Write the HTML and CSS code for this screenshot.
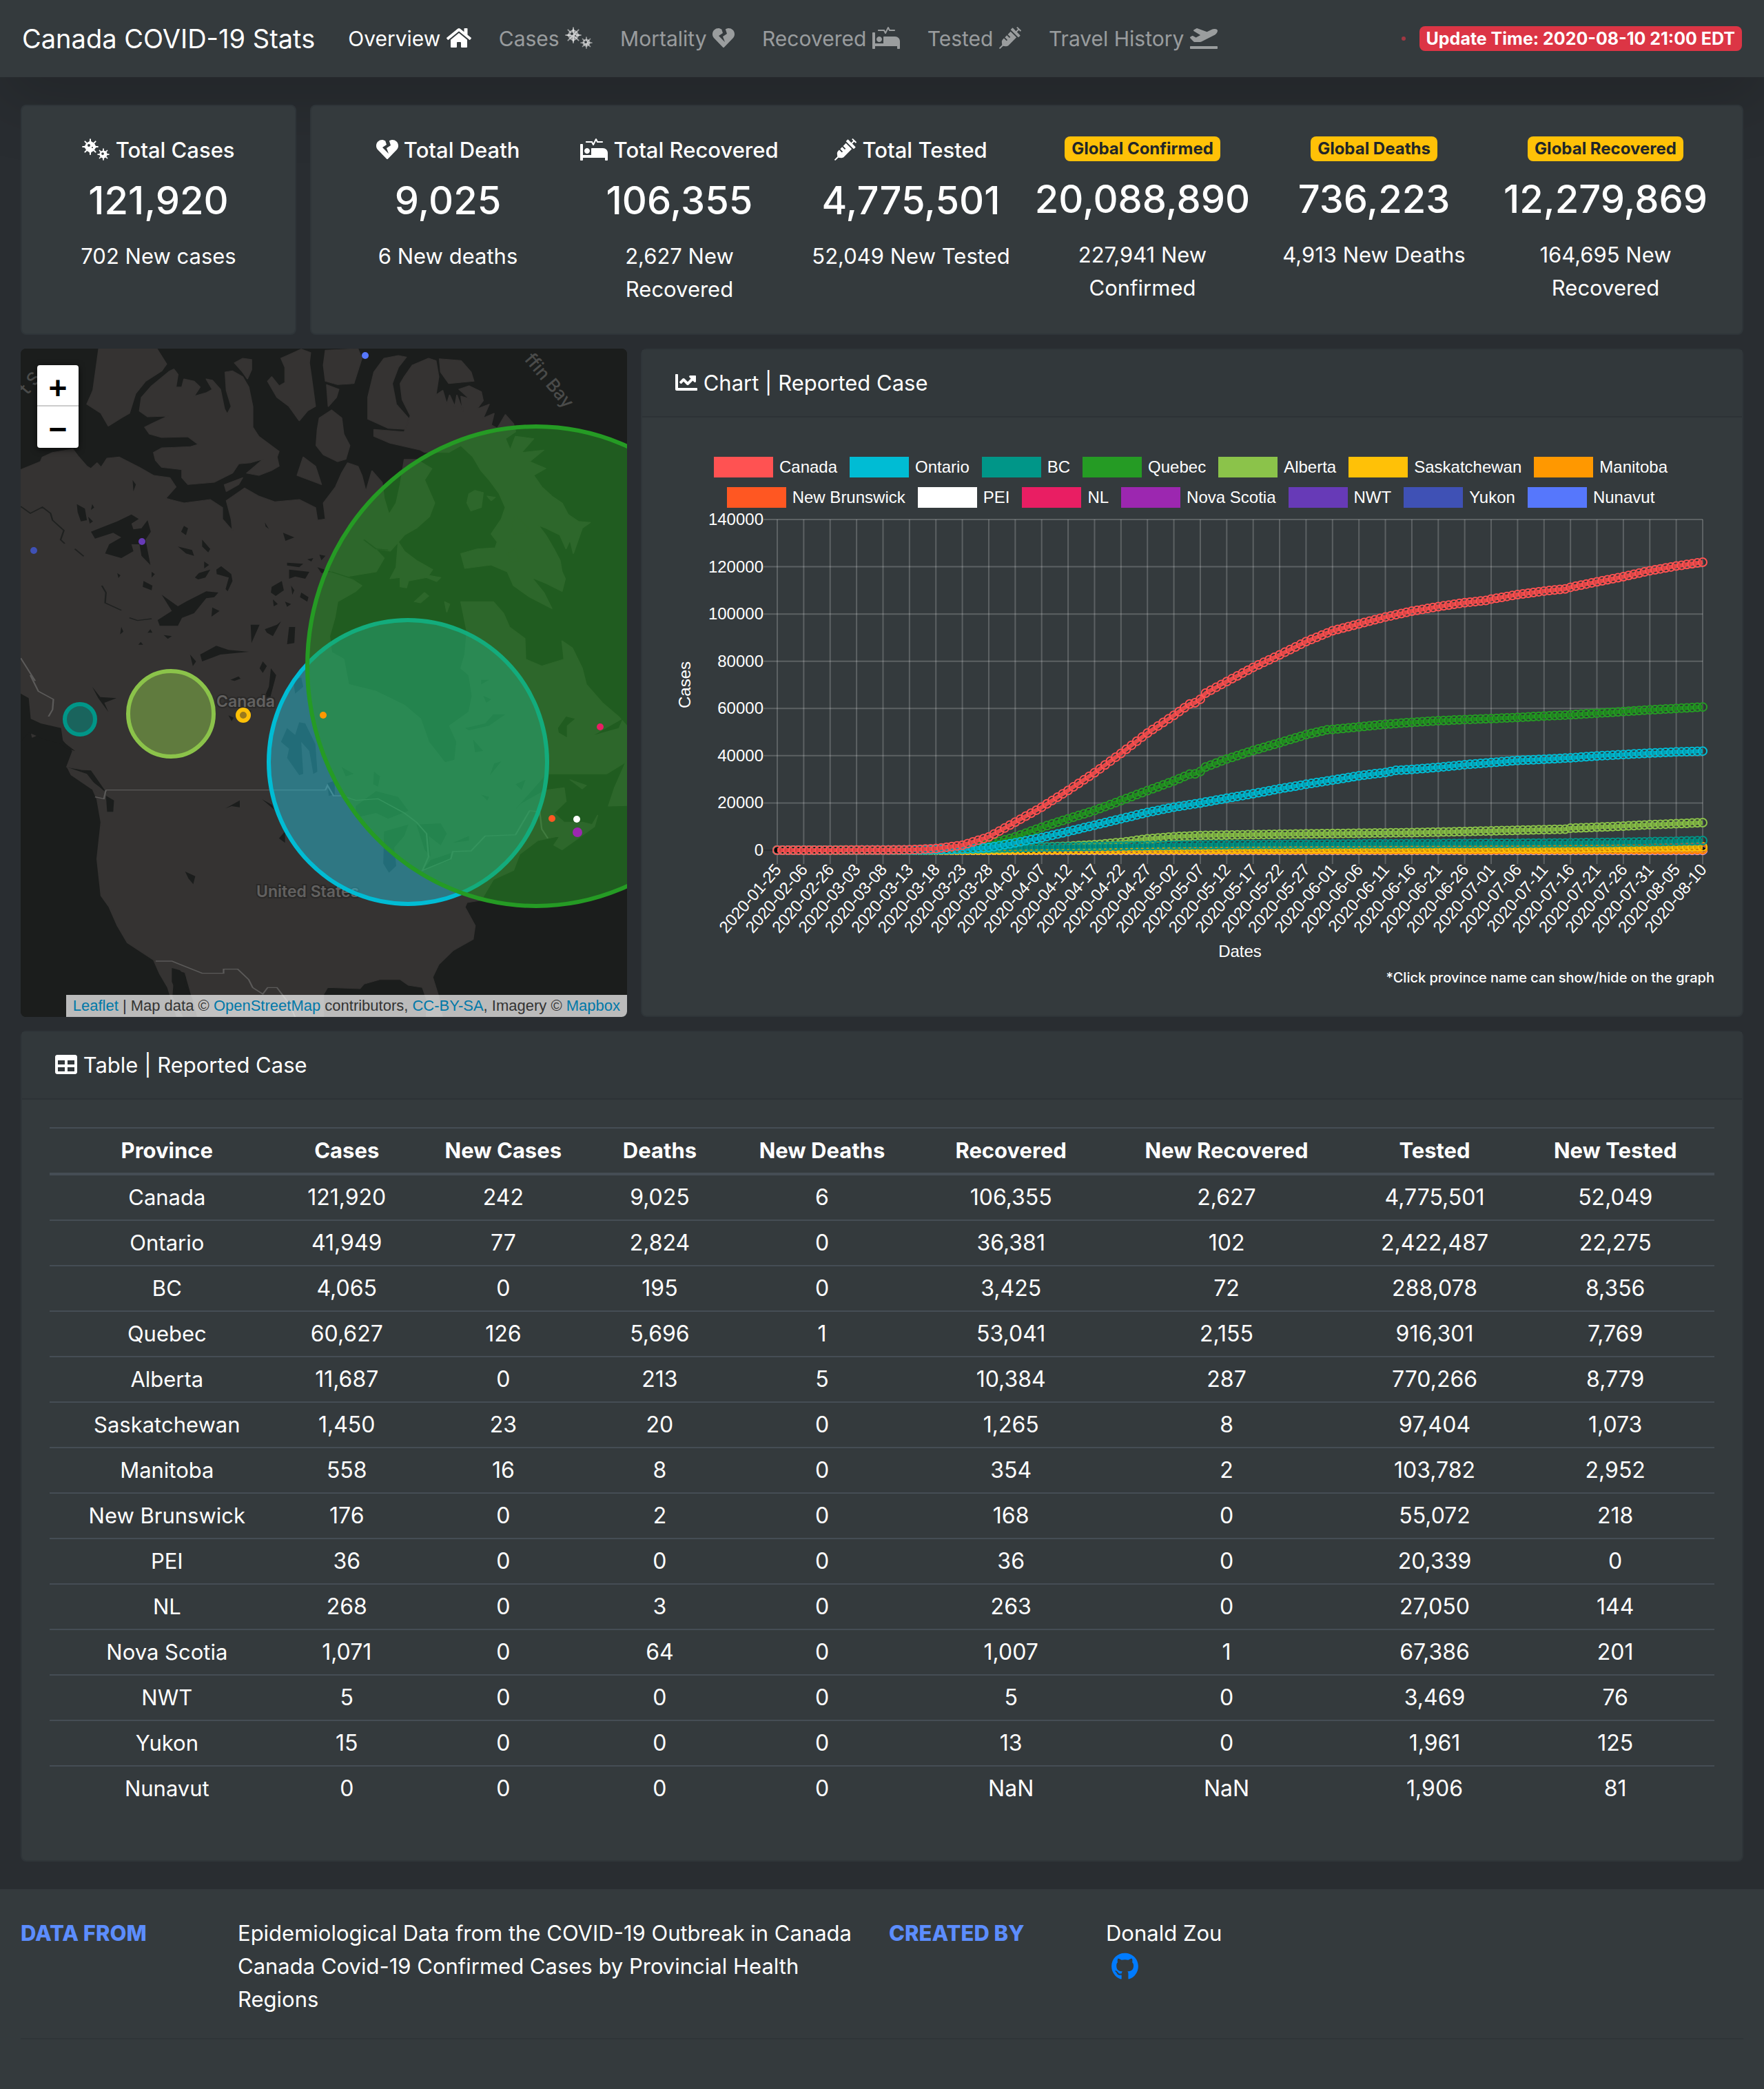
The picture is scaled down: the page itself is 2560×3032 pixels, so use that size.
FILE: index.html
```html
<!DOCTYPE html>
<html lang="en">
<head>
<meta charset="utf-8">
<meta name="viewport" content="width=device-width, initial-scale=1">
<title>Canada COVID-19 Stats</title>
<link rel="stylesheet" href="styles.css">
</head>
<body>
<svg class="sprite" aria-hidden="true">
  <symbol id="i-home" viewBox="0 0 576 512"><path d="M280.37 148.26L96 300.11V464a16 16 0 0 0 16 16l112.06-.29a16 16 0 0 0 15.92-16V368a16 16 0 0 1 16-16h64a16 16 0 0 1 16 16v95.64a16 16 0 0 0 16 16.05L464 480a16 16 0 0 0 16-16V300L295.67 148.26a12.19 12.19 0 0 0-15.3 0zM571.6 251.47L488 182.56V44.05a12 12 0 0 0-12-12h-56a12 12 0 0 0-12 12v72.61L318.47 43a48 48 0 0 0-61 0L4.34 251.47a12 12 0 0 0-1.6 16.9l25.5 31A12 12 0 0 0 45.15 301l235.22-193.74a12.19 12.19 0 0 1 15.3 0L530.9 301a12 12 0 0 0 16.9-1.6l25.5-31a12 12 0 0 0-1.7-16.93z"/></symbol>
  <symbol id="i-viruses" viewBox="0 0 640 512">
    <mask id="virus-holes"><rect width="640" height="512" fill="#fff"/><circle cx="160" cy="160" r="32"/><circle cx="240" cy="208" r="16"/><circle cx="480" cy="352" r="30"/></mask>
    <g mask="url(#virus-holes)">
      <circle cx="192" cy="192" r="122"/><circle cx="496" cy="368" r="90"/>
      <path fill="none" stroke="currentColor" stroke-width="32" stroke-linecap="round" d="M192 18v348M18 192h348M70 70l244 244M314 70L70 314"/>
      <path fill="none" stroke="currentColor" stroke-width="28" stroke-linecap="round" d="M496 242v252M370 368h252M408 280l176 176M584 280L408 456"/>
      <path d="M150 90l42-60 42 60zM150 294l42 60 42-60zM90 150l-60 42 60 42zM294 150l60 42-60 42z"/>
    </g>
  </symbol>
  <symbol id="i-heart" viewBox="0 0 512 512"><path d="M473.7 73.8l-2.4-2.5c-46-47-118-51.7-169.6-14.8L336 159.9l-96 64 48 128-144-144 96-64-28.6-86.5C159.7 19.6 87 24 40.7 71.4l-2.4 2.4C-10.4 123.6-12.5 202.9 31 256l212.1 218.6c7.1 7.3 18.6 7.3 25.7 0L481 255.9c43.5-53 41.4-132.3-7.3-182.1z"/></symbol>
  <symbol id="i-bed" viewBox="0 0 640 512"><path d="M528 224H272c-8.8 0-16 7.2-16 16v144H64V144c0-8.8-7.2-16-16-16H16c-8.8 0-16 7.2-16 16v352c0 8.8 7.2 16 16 16h32c8.8 0 16-7.2 16-16v-48h512v48c0 8.8 7.2 16 16 16h32c8.8 0 16-7.2 16-16V336c0-61.9-50.1-112-112-112zM136 96h126.1l27.6 55.2c5.9 11.8 22.7 11.8 28.6 0L368 51.8 390.1 96H512c8.8 0 16-7.2 16-16s-7.2-16-16-16H409.9L382.3 8.8C376.4-3 359.6-3 353.7 8.8L304 108.2l-19.9-39.8c-1.4-2.7-4.1-4.4-7.2-4.4H136c-4.4 0-8 3.6-8 8v16c0 4.4 3.6 8 8 8zm24 256c35.3 0 64-28.7 64-64s-28.7-64-64-64-64 28.7-64 64 28.7 64 64 64z"/></symbol>
  <symbol id="i-syringe" viewBox="0 0 512 512"><path d="M201.5 174.8l55.7 55.8c3.1 3.1 3.1 8.2 0 11.3l-11.3 11.3c-3.1 3.1-8.2 3.1-11.3 0l-55.7-55.8-45.3 45.3 55.8 55.8c3.1 3.1 3.1 8.2 0 11.3l-11.3 11.3c-3.1 3.1-8.2 3.1-11.3 0L111 265.2l-26.4 26.4c-17.3 17.3-25.6 41.1-23 65.4l7.1 63.6L2.3 487c-3.1 3.1-3.1 8.2 0 11.3l11.3 11.3c3.1 3.1 8.2 3.1 11.3 0l66.3-66.3 63.6 7.1c23.9 2.6 47.9-5.4 65.4-23l181.9-181.9-135.7-135.7-64.9 65zm308.2-93.3L430.5 2.3c-3.1-3.1-8.2-3.1-11.3 0l-11.3 11.3c-3.1 3.1-3.1 8.2 0 11.3l28.3 28.3-45.3 45.3-56.6-56.6-17-17c-3.1-3.1-8.2-3.1-11.3 0l-33.9 33.9c-3.1 3.1-3.1 8.2 0 11.3l17 17L424.8 223l17 17c3.1 3.1 8.2 3.1 11.3 0l33.9-34c3.1-3.1 3.1-8.2 0-11.3l-73.5-73.5 45.3-45.3 28.3 28.3c3.1 3.1 8.2 3.1 11.3 0l11.3-11.3c3.1-3.2 3.1-8.2 0-11.4z"/></symbol>
  <symbol id="i-plane" viewBox="0 0 640 512"><path d="M624 448H16c-8.84 0-16 7.16-16 16v32c0 8.84 7.16 16 16 16h608c8.84 0 16-7.16 16-16v-32c0-8.84-7.16-16-16-16zM80.55 341.27c6.28 6.84 15.1 10.72 24.33 10.71l130.54-.18a65.62 65.62 0 0 0 29.64-7.12l290.96-147.65c26.74-13.57 50.71-32.94 67.02-58.31 18.31-28.48 20.3-49.09 13.07-63.65-7.21-14.57-24.74-25.27-58.25-27.45-29.85-1.94-59.54 5.92-86.28 19.48l-98.51 49.99-218.7-82.06a17.799 17.799 0 0 0-18-1.11L90.62 67.29c-10.67 5.41-13.25 19.65-5.17 28.53l156.22 98.1-103.21 52.38-72.35-36.47a17.804 17.804 0 0 0-16.07.02L9.91 230.22c-10.44 5.3-13.19 19.12-5.57 28.08l76.21 82.97z"/></symbol>
  <symbol id="i-chart" viewBox="0 0 512 512"><path d="M496 384H64V80c0-8.84-7.16-16-16-16H16C7.16 64 0 71.16 0 80v336c0 17.67 14.33 32 32 32h464c8.84 0 16-7.16 16-16v-32c0-8.84-7.16-16-16-16zM464 96H345.94c-21.38 0-32.09 25.85-16.97 40.97l32.4 32.4L288 242.75l-73.37-73.37c-12.5-12.5-32.76-12.5-45.25 0l-68.69 68.69c-6.25 6.25-6.25 16.38 0 22.63l22.62 22.62c6.25 6.25 16.38 6.25 22.63 0L192 237.25l73.37 73.37c12.5 12.5 32.76 12.5 45.25 0l96-96 32.4 32.4c15.12 15.12 40.97 4.41 40.97-16.97V112c.01-8.84-7.15-16-15.99-16z"/></symbol>
  <symbol id="i-table" viewBox="0 0 512 512"><path d="M464 32H48C21.49 32 0 53.49 0 80v352c0 26.51 21.49 48 48 48h416c26.51 0 48-21.49 48-48V80c0-26.51-21.49-48-48-48zM224 416H64v-96h160v96zm0-160H64v-96h160v96zm224 160H288v-96h160v96zm0-160H288v-96h160v96z"/></symbol>
  <symbol id="i-github" viewBox="0 0 496 512"><path d="M165.9 397.4c0 2-2.3 3.6-5.2 3.6-3.3.3-5.6-1.3-5.6-3.6 0-2 2.3-3.6 5.2-3.6 3-.3 5.6 1.3 5.6 3.6zm-31.1-4.5c-.7 2 1.3 4.3 4.3 4.9 2.6 1 5.6 0 6.2-2s-1.3-4.3-4.3-5.2c-2.6-.7-5.5.3-6.2 2.3zm44.2-1.7c-2.9.7-4.9 2.6-4.6 4.9.3 2 2.9 3.3 5.9 2.6 2.9-.7 4.9-2.6 4.6-4.6-.3-1.9-3-3.2-5.9-2.9zM244.8 8C106.1 8 0 113.3 0 252c0 110.9 69.8 205.8 169.5 239.2 12.8 2.3 17.3-5.6 17.3-12.1 0-6.2-.3-40.4-.3-61.4 0 0-70 15-84.7-29.8 0 0-11.4-29.1-27.8-36.6 0 0-22.9-15.7 1.6-15.4 0 0 24.9 2 38.6 25.8 21.9 38.6 58.6 27.5 72.9 20.9 2.3-16 8.8-27.1 16-33.7-55.9-6.2-112.3-14.3-112.3-110.5 0-27.5 7.6-41.3 23.6-58.9-2.6-6.5-11.1-33.3 2.6-67.9 20.9-6.5 69 27 69 27 20-5.6 41.5-8.5 62.8-8.5s42.8 2.9 62.8 8.5c0 0 48.1-33.6 69-27 13.7 34.7 5.2 61.4 2.6 67.9 16 17.7 25.8 31.5 25.8 58.9 0 96.5-58.9 104.2-114.8 110.5 9.2 7.9 17 22.9 17 46.4 0 33.7-.3 75.4-.3 83.6 0 6.5 4.6 14.4 17.3 12.1C428.2 457.8 496 362.9 496 252 496 113.3 383.5 8 244.8 8z"/></symbol>
</svg>

<header class="navbar">
  <a class="brand" href="#">Canada COVID-19 Stats</a>
  <nav class="nav" aria-label="Main">
    <a class="nav-link active" href="#">Overview <svg class="icon icon-home"><use href="#i-home"/></svg></a>
    <a class="nav-link" href="#cases">Cases <svg class="icon icon-wide"><use href="#i-viruses"/></svg></a>
    <a class="nav-link" href="#mortality">Mortality <svg class="icon"><use href="#i-heart"/></svg></a>
    <a class="nav-link" href="#recovered">Recovered <svg class="icon icon-wide"><use href="#i-bed"/></svg></a>
    <a class="nav-link" href="#tested">Tested <svg class="icon"><use href="#i-syringe"/></svg></a>
    <a class="nav-link" href="#travel">Travel History <svg class="icon icon-wide"><use href="#i-plane"/></svg></a>
  </nav>
  <div class="updated">
    <span class="pulse"></span>
    <span class="badge badge-danger">Update Time: 2020-08-10 21:00 EDT</span>
  </div>
</header>

<main class="page">
  <section class="row row-stats">
    <div class="card stats">
      <div class="stat">
        <h2 class="stat-title"><svg class="icon icon-wide"><use href="#i-viruses"/></svg> Total Cases</h2>
        <p class="stat-number">121,920</p>
        <p class="stat-new">702 New cases</p>
      </div>
    </div>
    <div class="card stats">
      <div class="stat">
        <h2 class="stat-title"><svg class="icon"><use href="#i-heart"/></svg> Total Death</h2>
        <p class="stat-number">9,025</p>
        <p class="stat-new">6 New deaths</p>
      </div>
      <div class="stat">
        <h2 class="stat-title"><svg class="icon icon-wide"><use href="#i-bed"/></svg> Total Recovered</h2>
        <p class="stat-number">106,355</p>
        <p class="stat-new">2,627 New Recovered</p>
      </div>
      <div class="stat">
        <h2 class="stat-title"><svg class="icon"><use href="#i-syringe"/></svg> Total Tested</h2>
        <p class="stat-number">4,775,501</p>
        <p class="stat-new">52,049 New Tested</p>
      </div>
      <div class="stat">
        <h2 class="stat-title stat-title-badge"><span class="badge badge-warning">Global Confirmed</span></h2>
        <p class="stat-number">20,088,890</p>
        <p class="stat-new">227,941 New Confirmed</p>
      </div>
      <div class="stat">
        <h2 class="stat-title stat-title-badge"><span class="badge badge-warning">Global Deaths</span></h2>
        <p class="stat-number">736,223</p>
        <p class="stat-new">4,913 New Deaths</p>
      </div>
      <div class="stat">
        <h2 class="stat-title stat-title-badge"><span class="badge badge-warning">Global Recovered</span></h2>
        <p class="stat-number">12,279,869</p>
        <p class="stat-new">164,695 New Recovered</p>
      </div>
    </div>
  </section>

  <section class="row row-main">
    <div class="map">
      <svg class="map-canvas" viewBox="0 0 880 970" preserveAspectRatio="xMidYMid slice" role="img" aria-label="Map of reported cases by province">
        <rect width="880" height="970" fill="#1b1d1c"/>
        <g transform="translate(-30 -16) scale(.58676 .33333)">
          <g fill="#353332" stroke="#353332" stroke-width="3" stroke-linejoin="round">
            <path d="M245 40H385L412 115 400 145 360 190 335 245 320 330 300 350 268 385 250 330 215 290 230 230 238 130z"/>
            <path d="M430 137L440 160 435 215 450 215 455 180 480 190 495 215 480 255 510 240 525 225 510 180 525 185 545 225 555 310 562 333 572 300 560 230 557 150 575 145 600 170 615 215 625 300 625 390 640 430 690 495 685 520 690 560 670 580 640 600 610 590 650 530 620 545 590 550 575 590 530 630 465 640 450 610 450 575 400 565 385 535 380 500 400 480 470 475 490 465 465 432 400 435 370 420 358 390 375 375 415 342 365 345 345 320 350 260 375 210 420 145z"/>
            <path d="M580 110L600 90 622 95 622 140 612 180 600 150z"/>
            <path d="M695 90L720 70 745 50 768 65 765 110 770 170 780 300 760 320 740 362 715 300 685 260 662 190 672 170 690 210 705 195 705 130z"/>
            <path d="M805 55L885 48 895 90 875 200 835 205 805 190 800 120zM808 205L838 225 832 260 812 300z"/>
            <path d="M790 350L820 315 845 350 850 420 865 470 855 530 835 540 800 510 782 470 785 400z"/>
            <path d="M950 90L985 78 1005 85 985 130 970 200 980 290 1010 350 1005 400 960 395 910 355 910 260 925 150z"/>
            <path d="M1087 92L1140 100 1165 150 1172 190 1110 200 1090 150z"/>
            <path d="M735 600L750 520 780 560 795 640zM555 640L600 610 590 640 560 670z"/>
            <path d="M1000 170L1020 120 1060 90 1078 100 1085 170 1078 250 1095 230 1105 290 1112 250 1125 300 1130 250 1145 320 1140 255 1160 265 1135 225 1160 210 1190 235 1195 275 1180 310 1210 290 1195 350 1222 330 1215 380 1230 395 1250 335 1270 375 1275 410 1250 440 1262 490 1275 430 1320 440 1290 500 1345 490 1310 540 1350 570 1320 600 1340 650 1365 690 1390 720 1405 770 1430 800 1460 805 1440 830 1430 880 1418 940 1410 880 1400 920 1385 860 1350 830 1332 818 1350 860 1370 920 1385 970 1390 1020 1398 1050 1390 1105 1350 1070 1315 1045 1345 1110 1365 1180 1310 1130 1270 1080 1255 1020 1215 990 1150 1005 1140 940 1180 920 1225 915 1230 890 1215 855 1240 790 1250 740 1235 680 1210 620 1190 580 1170 520 1140 470 1110 500 1050 500 1040 490 965 460 925 430 925 400 1000 410 1015 340 995 270 990 200z"/>
            <path d="M1275 775L1308 830 1300 850 1270 855 1265 820zM1160 680L1175 665 1195 675 1190 740 1165 755 1155 720zM1025 1150L1050 1110 1060 1125 1040 1155zM1205 690L1225 695 1215 710zM1100 1150L1112 1160 1105 1195zM1255 940L1275 920 1285 970 1265 980z"/>
            <path d="M985 890L1000 930 1030 970 1070 1010 1060 1035 1090 1045 1080 1062 1055 1045 1010 1060 1005 1090 990 1085 990 1045 965 1050 980 1000z"/>
            <path d="M51 575L100 540 105 520 130 500 180 485 195 520 215 560 225 570 240 545 250 565 265 525 295 520 345 565 380 600 420 610 435 650 410 700 455 720 520 705 550 740 550 790 575 840 572 790 560 710 605 655 640 690 680 715 740 705 780 740 785 795 805 790 800 720 830 650 845 590 860 545 885 560 895 600 905 670 920 580 945 630 950 700 962 770 980 720 990 640 1000 530 1030 530 1068 570 1050 620 1075 720 1062 780 1030 830 1000 860 985 890 965 930 930 920 905 875 950 960 930 1020 860 1040 895 1080 880 1105 835 1150 828 1220 815 1300 820 1370 850 1400 862 1510 930 1540 1000 1600 1040 1660 1060 1760 1100 1850 1125 1840 1130 1760 1112 1690 1160 1630 1168 1560 1160 1470 1140 1440 1150 1380 1155 1280 1140 1150 1220 1150 1245 1200 1260 1260 1298 1310 1300 1400 1340 1430 1395 1400 1390 1320 1415 1350 1440 1440 1450 1510 1490 1590 1530 1650 1560 1710 1560 1835 1500 1900 1350 1900 1330 1940 1245 2110 1290 2030 1350 1970 1395 1960 1400 2020 1370 2070 1395 2110 1440 2110 1465 2120 1478 2080 1470 2130 1390 2230 1370 2210 1385 2170 1330 2190 1285 2250 1270 2320 1220 2360 1190 2450 1155 2460 1150 2480 1175 2560 1170 2620 1120 2670 1085 2730 1070 2785 1085 2870 1095 2970 1055 2970 1055 2880 1045 2830 1010 2820 990 2795 940 2795 900 2815 890 2835 810 2830 800 2860 800 2970 490 2970 475 2870 458 2765 430 2750 425 2870 455 2970 440 2970 415 2830 395 2770 380 2710 315 2635 290 2560 270 2480 250 2430 245 2350 240 2270 250 2110 240 2010 225 1950 200 1880 165 1870 180 1800 150 1740 130 1700 80 1740 70 1650 51 1540z"/>
            <path d="M1550 1840L1520 1960 1505 2040 1550 2038zM1410 1925L1450 1950 1440 1965z"/>
          </g>
          <g fill="#1b1d1c">
            <path d="M225 845l65-45 35-30 18 20-18 20 5 25 20-5 15-35 8 50-13 35 12 110-22-40-5-50-20 0 5 30-30 30-40-20 10-40 30-30-20-20-45 25z"/>
            <path d="M400 1120l40 50 20-20 50-45 30 5-10 20-20 5-30 65-30 20-10 35h-45l-5-25 35-40z"/>
            <path d="M535 1010l12-15 25 35 3 30-12 45-5-10 8-50-30-15zM500 1410l-5-30 40-38 30 18 50 8-70 12zM650 1410l10 20-10 30-8-20zM670 1440l13 30-15 100-18 10 15-60zM470 1380l15 30-8 20zM482 1045l10-20 28-15-12 35-18 8z"/>
            <path d="M190 725l20 20 5 50-15 5-8-40zM228 725l5 15-8 10zM218 780l12 20-8 10zM328 620l8 20-6 30zM455 820l10 10-5 30-12-15zM440 910l35 15 5 25-20-10zM500 880l20 40-5 15-15-25zM505 975l12 15-12 15zM655 805l10 28-8-10zM700 850l28 20-22 15zM710 980l40 5-10 15-30-8zM355 1060l22 20-2 20-22-15zM300 1260l5 20-8 12zM405 1295l20 5-10 12zM372 1270l5 15-12 0zM348 1325l6 12-12 0zM525 1175l18 15-20 25zM620 1250l22 0-20 80zM655 1270l30-20 10-15-20 65-15-15zM715 1260l15 0-2 70-18 5zM672 1085l25-25 5 40-20 25-12-15zM715 1010l50 10-10 30-25-10-15 10zM745 1110l18 20-3 20-18-20zM720 1080l8 20-5 20zM675 1140l12 20-10 10zM705 1150l15 10-10 12zM760 965l15-5-5 15zM790 945l15 5-10 20zM785 1000l35 20-25 5zM290 1025l8 10-5 12zM375 1020l8 10-8 15z"/>
            <path d="M570 1490l20-15 5 10-15 10zM228 1520l20 45 40 5-30 20 10 40-25-60zM565 1645l13 10-5 15zM610 1620l12 5-8 15zM558 2050l35-35 0 30-20-5zM648 2010l25 25 5 20zM690 2180l15-30 0 50zM458 2325l25 20-5 35-12-25z"/>
            <path d="M740 1675l15 5 25 90 5 120-10 10-10-100-20-40 5 140-10 5-30-75 5-40-20-30 15-60 20 30zM725 1490l20-10 5 40-20 30z"/>
            <path d="M880 2040l50-65 55 25 25 60-50 35-30-25-50 20zM950 2150l60-30-10 50-25 50 5 80-18 30-14-40zM1030 2120l60-5 15 45-15 50-30-40 5 90-15-30zM1045 2320l70-45 0-30-50 30zM1120 2200l40-30 0 20zM810 1940l18-10 0 60-15 5z"/>
            <path d="M1380 1700l20-50 22 10-20 30 0 50-20-20zM1470 1730l20-20 50-50-10 40-40 20zM1240 1845l-18 10-10 50zM925 1890l15 20-5 45-12-10zM1190 1990l20 10-5 15zM1275 1945l25-20-10 45zM1170 1750l25 50-20 5zM1150 1700l50-20 20-40 30 0-40 50-50 20zM1190 1490l20 0-20 20zM1195 1560l20 15-12 15zM845 1870l30 30-20 10z"/>
            <path d="M51 1550l20 20 5 90 25 20 50 20 5 60 30 40-20-10-15-20-40-20-40-30-20 40zM262 1995l20 20-2 50-15 0zM165 1880l60 5 40 100-20-30-30-40z"/>
            <path d="M425 2745l20 10 15 30-5 30 20 60 15 100-30-40-20-70-15-60z"/>
          </g>
          <g fill="#353332"><path d="M165 1870L215 1900 255 1990 225 1965 175 1905z"/></g>
          <g fill="none" stroke="#1f2120" stroke-width="4">
            <path d="M51 735l24 30 30-27 20 27 5 30 28 45-8 40 10 17M185 920l22 32M252 1080l10 30-2 45 40 32M320 1220l20 12 35-8M900 880l30 40 30 5M820 1020l70 40"/>
          </g>
          <g fill="none" stroke="#5b5a59" stroke-width="4">
            <path d="M262 1970H805l5-20 15 45 20 0 35 20 55-7 65 62 30 40 25 50 5 100-15 60 70-50 5-32 45-3 35-65 75-5 35-105 25 5 5 75 15 40"/>
            <path d="M385 2715h40l75 53h53v-18h35l27 45 10 35 25 28 12-28h23l30 70 15 58M75 1470l20 70 37 35-2 45-10 30M51 1395l36 100M235 2000l22 8 5-38"/>
          </g>
        </g>
        <g class="map-label">
          <text x="284" y="520">Canada</text>
          <text x="342" y="796">United States</text>
          <text class="sea" transform="translate(730 16) rotate(50)">ffin Bay</text>
          <text class="sea" transform="translate(10 68) rotate(-50)">t S</text>
        </g>
        <g stroke-width="6">
          <circle cx="86" cy="538" r="22" fill="#009688" fill-opacity=".5" stroke="#009688"/>
          <ellipse cx="562" cy="600" rx="202" ry="206" fill="#2abbd4" fill-opacity=".5" stroke="#00bcd4"/>
          <ellipse cx="748" cy="461" rx="332" ry="348" fill="#259b24" fill-opacity=".5" stroke="#259b24"/>
          <circle cx="218" cy="530" r="62" fill="#8bc34a" fill-opacity=".5" stroke="#8bc34a"/>
          <circle cx="323" cy="532" r="8" fill="#ffc107" fill-opacity=".5" stroke="#ffc107"/>
        </g>
        <circle cx="439" cy="532" r="5" fill="#ff9800"/>
        <circle cx="841" cy="549" r="5" fill="#e91e63"/>
        <circle cx="771" cy="682" r="5" fill="#ff5722"/>
        <circle cx="807" cy="683" r="5" fill="#fff"/>
        <circle cx="808" cy="702" r="7" fill="#9c27b0"/>
        <circle cx="500" cy="10" r="5" fill="#5677fc"/>
        <circle cx="176" cy="280" r="5" fill="#673ab7"/>
        <circle cx="19" cy="293" r="5" fill="#3f51b5"/>
      </svg>
      <div class="zoom">
        <button type="button" aria-label="Zoom in">+</button>
        <button type="button" aria-label="Zoom out">−</button>
      </div>
      <p class="attribution"><a href="#leaflet">Leaflet</a> | Map data © <a href="#osm">OpenStreetMap</a> contributors, <a href="#cc">CC-BY-SA</a>, Imagery © <a href="#mapbox">Mapbox</a></p>
    </div>

    <div class="card">
      <h2 class="card-header"><svg class="icon"><use href="#i-chart"/></svg> Chart | Reported Case</h2>
      <div class="card-body chart-body">
        <div class="legend" id="legend"></div>
        <svg class="chart" id="chart" viewBox="972 744 1516 660" role="img" aria-label="Reported cases over time"></svg>
        <p class="footnote">*Click province name can show/hide on the graph</p>
      </div>
    </div>
  </section>

  <section class="card">
    <h2 class="card-header"><svg class="icon"><use href="#i-table"/></svg> Table | Reported Case</h2>
    <div class="card-body">
      <table class="table">
        <colgroup><col class="c-province"><col class="c-cases"><col class="c-new-cases"><col class="c-deaths"><col class="c-new-deaths"><col class="c-recovered"><col class="c-new-recovered"><col class="c-tested"><col></colgroup>
        <thead><tr><th>Province</th><th>Cases</th><th>New Cases</th><th>Deaths</th><th>New Deaths</th><th>Recovered</th><th>New Recovered</th><th>Tested</th><th>New Tested</th></tr></thead>
        <tbody>
          <tr><td>Canada</td><td>121,920</td><td>242</td><td>9,025</td><td>6</td><td>106,355</td><td>2,627</td><td>4,775,501</td><td>52,049</td></tr>
          <tr><td>Ontario</td><td>41,949</td><td>77</td><td>2,824</td><td>0</td><td>36,381</td><td>102</td><td>2,422,487</td><td>22,275</td></tr>
          <tr><td>BC</td><td>4,065</td><td>0</td><td>195</td><td>0</td><td>3,425</td><td>72</td><td>288,078</td><td>8,356</td></tr>
          <tr><td>Quebec</td><td>60,627</td><td>126</td><td>5,696</td><td>1</td><td>53,041</td><td>2,155</td><td>916,301</td><td>7,769</td></tr>
          <tr><td>Alberta</td><td>11,687</td><td>0</td><td>213</td><td>5</td><td>10,384</td><td>287</td><td>770,266</td><td>8,779</td></tr>
          <tr><td>Saskatchewan</td><td>1,450</td><td>23</td><td>20</td><td>0</td><td>1,265</td><td>8</td><td>97,404</td><td>1,073</td></tr>
          <tr><td>Manitoba</td><td>558</td><td>16</td><td>8</td><td>0</td><td>354</td><td>2</td><td>103,782</td><td>2,952</td></tr>
          <tr><td>New Brunswick</td><td>176</td><td>0</td><td>2</td><td>0</td><td>168</td><td>0</td><td>55,072</td><td>218</td></tr>
          <tr><td>PEI</td><td>36</td><td>0</td><td>0</td><td>0</td><td>36</td><td>0</td><td>20,339</td><td>0</td></tr>
          <tr><td>NL</td><td>268</td><td>0</td><td>3</td><td>0</td><td>263</td><td>0</td><td>27,050</td><td>144</td></tr>
          <tr><td>Nova Scotia</td><td>1,071</td><td>0</td><td>64</td><td>0</td><td>1,007</td><td>1</td><td>67,386</td><td>201</td></tr>
          <tr><td>NWT</td><td>5</td><td>0</td><td>0</td><td>0</td><td>5</td><td>0</td><td>3,469</td><td>76</td></tr>
          <tr><td>Yukon</td><td>15</td><td>0</td><td>0</td><td>0</td><td>13</td><td>0</td><td>1,961</td><td>125</td></tr>
          <tr><td>Nunavut</td><td>0</td><td>0</td><td>0</td><td>0</td><td>NaN</td><td>NaN</td><td>1,906</td><td>81</td></tr>
        </tbody>
      </table>
    </div>
  </section>
</main>

<footer class="footer">
  <div class="footer-grid">
    <h2 class="footer-title">DATA FROM</h2>
    <div>
      <p>Epidemiological Data from the COVID-19 Outbreak in Canada</p>
      <p class="source">Canada Covid-19 Confirmed Cases by Provincial Health Regions</p>
    </div>
    <h2 class="footer-title">CREATED BY</h2>
    <div>
      <p>Donald Zou</p>
      <a class="github" href="#github" aria-label="GitHub"><svg><use href="#i-github"/></svg></a>
    </div>
  </div>
  <hr class="rule">
</footer>
<script src="chart.js"></script>
</body>
</html>
```
FILE: styles.css
```css
* { box-sizing: border-box; }

body {
  margin: 0;
  background: #292d31;
  color: #fff;
  font-family: Inter, "Liberation Sans", sans-serif;
  font-size: 31px;
  line-height: 48px;
}

h2, p { margin: 0; font-size: inherit; font-weight: inherit; }
a { text-decoration: none; }
button { font: inherit; }
.sprite { position: absolute; width: 0; height: 0; }

.icon {
  width: 32px;
  height: 32px;
  vertical-align: -4px;
  fill: currentColor;
}
.icon-home { width: 36px; }
.icon-wide { width: 40px; }

.badge {
  display: inline-block;
  padding: 6px 10px;
  border-radius: 8px;
  font-size: 24px;
  line-height: 24px;
  font-weight: 700;
  white-space: nowrap;
}
.badge-danger { background: #dc3545; font-size: 25px; }
.badge-warning { background: #ffc107; color: #212529; }

/* Top bar */
.navbar {
  display: flex;
  align-items: center;
  padding: 16px 32px;
  min-height: 112px;
  background: #343a3d;
  box-shadow: 0 32px 96px rgba(0, 0, 0, .175);
}
.brand { margin-right: 48px; color: #fff; font-size: 38px; line-height: 60px; }
.nav { display: flex; gap: 40px; font-size: 30px; }
.nav-link { color: rgba(255, 255, 255, .5); white-space: nowrap; }
.nav-link.active { color: #fff; }
.updated { display: flex; align-items: center; gap: 20px; margin-left: auto; }
.pulse { width: 6px; height: 6px; border-radius: 50%; background: #dc3545; opacity: .65; }

/* Page grid */
.page {
  display: flex;
  flex-direction: column;
  gap: 20px;
  padding: 40px 30px;
}
.row { display: grid; gap: 20px; }
.row-stats { grid-template-columns: 5fr 26fr; }
.row-main { grid-template-columns: 11fr 20fr; }

.card {
  min-width: 0;
  border: 2px solid #2f3539;
  border-radius: 8px;
  background: #343a3d;
}
.card-header {
  padding: 24px 48px;
  border-bottom: 2px solid #2d3236;
  background: #32383b;
}
.card-body { padding: 40px; }

/* Summary numbers */
.stats { display: flex; padding: 40px 30px; }
.stat { flex: 1 1 0; min-width: 0; padding: 0 16px; text-align: center; }
.stat-title { height: 48px; font-weight: 500; white-space: nowrap; }
.stat-title-badge { display: flex; justify-content: center; align-items: center; height: 46px; padding-bottom: 2px; }
.stat-number { margin: 16px -10px 24px; font-size: 56px; line-height: 66px; font-weight: 500; }

/* Map */
.map { position: relative; min-height: 970px; border-radius: 8px; overflow: hidden; background: #1b1d1c; }
.map-canvas { display: block; width: 100%; height: 100%; }
.map-label { fill: #626160; font-size: 23px; font-weight: 600; paint-order: stroke; stroke: #2a2928; stroke-width: 4px; }
.map-label .sea { fill: #4a4b4a; stroke: none; font-size: 26px; font-weight: 500; }
.zoom {
  position: absolute;
  top: 24px;
  left: 24px;
  display: flex;
  flex-direction: column;
  border-radius: 4px;
  overflow: hidden;
  box-shadow: 0 2px 10px rgba(0, 0, 0, .65);
}
.zoom button {
  width: 60px;
  height: 60px;
  padding: 6px 0 0;
  border: 0;
  background: #fff;
  color: #000;
  font: bold 46px/54px "Liberation Sans", sans-serif;
}
.zoom button:first-child { border-bottom: 2px solid #ccc; }
.attribution {
  position: absolute;
  right: 0;
  bottom: 0;
  padding: 0 10px;
  background: rgba(255, 255, 255, .7);
  color: #333;
  font: 22px/32px "Liberation Sans", sans-serif;
  white-space: nowrap;
}
.attribution a { color: #0078a8; }

/* Chart */
.chart-body { font-family: "Liberation Sans", sans-serif; }
.legend { display: flex; flex-wrap: wrap; justify-content: center; gap: 14px 18px; margin-top: 17px; padding: 0 62px 0 58px; }
.legend button {
  display: flex;
  align-items: center;
  gap: 9px;
  padding: 0;
  border: 0;
  background: none;
  color: #fff;
  font-size: 24px;
  line-height: 30px;
  cursor: pointer;
}
.legend button.off { text-decoration: line-through; }
.swatch { width: 86px; height: 30px; }
.chart { display: block; width: 100%; height: auto; margin-top: 7px; overflow: visible; }
.chart text { fill: #fff; font-size: 24px; }
.footnote { font-family: Inter, sans-serif; font-size: 20px; line-height: 30px; font-weight: 500; text-align: right; }

/* Table */
.table {
  width: 100%;
  margin-bottom: 32px;
  border-collapse: collapse;
  table-layout: fixed;
  text-align: center;
}
.table th, .table td { padding: 8px 0; border-top: 2px solid #454d55; }
.table th { border-bottom: 4px solid #454d55; font-weight: 700; }
.table td + td { font-size: 32px; }
.c-province { width: 14.1%; }
.c-cases { width: 7.5%; }
.c-new-cases { width: 11.3%; }
.c-deaths { width: 7.5%; }
.c-new-deaths { width: 12%; }
.c-recovered { width: 10.7%; }
.c-new-recovered { width: 15.2%; }
.c-tested { width: 9.8%; }

/* Footer */
.footer { padding: 40px 0 72px; background: #343a3d; }
.footer-grid { display: grid; grid-template-columns: 1fr 3fr 1fr 3fr; padding: 0 10px 0 30px; }
.footer-title { color: #5c8dff; font-weight: 800; }
.source { max-width: 885px; }
.github { display: flex; align-items: center; height: 48px; padding-left: 8px; color: #007bff; }
.github svg { width: 39px; height: 40px; fill: currentColor; }
.rule { height: 2px; margin: 32px 30px 0; border: 0; background: #2f3538; }
```
FILE: chart.js
```js
const dates = [
  '2020-01-25', '2020-02-06', '2020-02-26', '2020-03-03', '2020-03-08', '2020-03-13', '2020-03-18', '2020-03-23',
  '2020-03-28', '2020-04-02', '2020-04-07', '2020-04-12', '2020-04-17', '2020-04-22', '2020-04-27', '2020-05-02',
  '2020-05-07', '2020-05-12', '2020-05-17', '2020-05-22', '2020-05-27', '2020-06-01', '2020-06-06', '2020-06-11',
  '2020-06-16', '2020-06-21', '2020-06-26', '2020-07-01', '2020-07-06', '2020-07-11', '2020-07-16', '2020-07-21',
  '2020-07-26', '2020-07-31', '2020-08-05', '2020-08-10'
];

const series = [
  ['Canada', '#ff5252', { 0: 1, 4: 60, 5: 200, 6: 700, 7: 2100, 8: 5600, 9: 11900, 10: 18200, 11: 25300, 12: 32800, 13: 41000, 14: 49600, 15: 57100, 15.6: 61900, 15.8: 62400, 16: 63900, 16.2: 66500, 17: 71400, 18: 77400, 19: 82700, 20: 88300, 21: 92900, 22: 95800, 23: 98700, 24: 101200, 25: 103100, 26: 104800, 26.8: 105700, 27: 106300, 28: 108200, 29: 109700, 29.8: 110600, 30: 111300, 31: 113600, 32: 115800, 33: 118300, 34: 120300, 35: 121920 }],
  ['Ontario', '#00bcd4', { 0: 0, 5: 60, 6: 210, 7: 500, 8: 1150, 9: 3100, 10: 5300, 11: 7900, 12: 10600, 13: 13300, 14: 16000, 15: 18200, 16: 20000, 17: 22000, 18: 23900, 19: 26000, 20: 27900, 21: 29700, 22: 31500, 23: 32900, 23.4: 33800, 24: 34200, 25: 35100, 26: 36200, 27: 37100, 28: 38000, 29: 38500, 30: 39100, 31: 39900, 32: 40500, 33: 41100, 34: 41600, 35: 41949 }],
  ['BC', '#009688', { 0: 0, 5: 60, 6: 230, 7: 470, 8: 880, 9: 1120, 10: 1270, 12: 1600, 14: 1950, 16: 2280, 20: 2560, 24: 2750, 28: 2950, 30: 3100, 32: 3350, 34: 3800, 35: 4065 }],
  ['Quebec', '#259b24', { 0: 0, 5: 20, 6: 100, 7: 600, 8: 2500, 9: 5600, 10: 9700, 11: 13300, 12: 16800, 13: 21000, 14: 25200, 15: 29300, 15.6: 32200, 15.8: 32300, 16: 33300, 16.2: 35200, 17: 38600, 18: 42200, 19: 45500, 20: 48900, 20.8: 51000, 21: 51100, 22: 52200, 23: 53300, 24: 54100, 25: 54800, 26: 55300, 27: 55700, 28: 56200, 29: 56800, 30: 57300, 31: 58000, 32: 58700, 33: 59400, 34: 60000, 35: 60627 }],
  ['Alberta', '#8bc34a', { 0: 0, 6: 100, 7: 300, 8: 540, 9: 970, 10: 1350, 11: 1700, 12: 2300, 13: 3300, 14: 4800, 15: 5700, 16: 6200, 18: 6600, 21: 7050, 24: 7450, 26: 7900, 28: 8450, 29.8: 8900, 30: 9300, 32: 10200, 33: 10800, 34: 11200, 35: 11687 }],
  ['Saskatchewan', '#ffc107', { 0: 0, 7: 50, 8: 130, 10: 260, 15: 430, 20: 630, 25: 730, 30: 850, 33: 1250, 35: 1450 }],
  ['Manitoba', '#ff9800', { 0: 0, 8: 60, 10: 200, 15: 270, 30: 325, 35: 558 }],
  ['New Brunswick', '#ff5722', { 0: 0, 8: 50, 12: 118, 25: 165, 35: 176 }],
  ['PEI', '#ffffff', { 0: 0, 10: 22, 35: 36 }],
  ['NL', '#e91e63', { 0: 0, 8: 100, 10: 230, 35: 268 }],
  ['Nova Scotia', '#9c27b0', { 0: 0, 8: 100, 11: 450, 15: 960, 20: 1050, 35: 1071 }],
  ['NWT', '#673ab7', { 0: 0, 10: 4, 35: 5 }],
  ['Yukon', '#3f51b5', { 0: 0, 10: 7, 35: 15 }],
  ['Nunavut', '#5677fc', { 0: 0, 35: 0 }]
];

const LEFT = 1128, RIGHT = 2471, TOP = 754, BOTTOM = 1234;
const STEPS = 5;
const xAt = tick => LEFT + (RIGHT - LEFT) * tick / (dates.length - 1);
const yAt = value => BOTTOM - (BOTTOM - TOP) * value / 140000;

function interpolate(samples, tick) {
  const keys = Object.keys(samples).map(Number).sort((a, b) => a - b);
  let i = 1;
  while (i < keys.length - 1 && keys[i] < tick) i++;
  const a = keys[i - 1], b = keys[i];
  return samples[a] + (samples[b] - samples[a]) * (tick - a) / (b - a);
}

let out = '';
for (let v = 0; v <= 140000; v += 20000) {
  const y = yAt(v);
  out += `<path d="M${LEFT - 20} ${y}H${RIGHT}" stroke="${v ? '#fff' : '#000'}" stroke-opacity=".2" stroke-width="2"/>`;
  out += `<text x="${LEFT - 20}" y="${y + 8}" text-anchor="end">${v}</text>`;
}
dates.forEach((d, i) => {
  const x = xAt(i);
  out += `<path d="M${x} ${TOP}V${BOTTOM + 20}" stroke="#fff" stroke-opacity=".2" stroke-width="2"/>`;
  out += `<text text-anchor="end" transform="translate(${x + 7} ${BOTTOM + 29}) rotate(-49)">${d}</text>`;
});
out += `<text x="${(LEFT + RIGHT) / 2}" y="1389" text-anchor="middle">Dates</text>`;
out += `<text text-anchor="middle" transform="translate(1002 ${(TOP + BOTTOM) / 2}) rotate(-90)">Cases</text>`;

for (let s = series.length - 1; s >= 0; s--) {
  const [, color, samples] = series[s];
  const pts = [];
  for (let n = 0; n <= (dates.length - 1) * STEPS; n++) {
    const tick = n / STEPS;
    pts.push([xAt(tick), yAt(interpolate(samples, tick))]);
  }
  out += `<g id="series-${s}" stroke="${color}"><polyline fill="none" stroke-width="6" points="${pts.join(' ')}"/>`;
  out += pts.map(([x, y]) => `<circle cx="${x}" cy="${y}" r="6" fill="#000" fill-opacity=".1" stroke-width="2"/>`).join('');
  out += '</g>';
}
document.getElementById('chart').innerHTML = out;

const legend = document.getElementById('legend');
series.forEach(([name, color], s) => {
  const button = document.createElement('button');
  button.type = 'button';
  button.innerHTML = `<span class="swatch" style="background:${color}"></span>${name}`;
  button.addEventListener('click', () => {
    const off = button.classList.toggle('off');
    document.getElementById('series-' + s).style.display = off ? 'none' : '';
  });
  legend.append(button);
});
```
